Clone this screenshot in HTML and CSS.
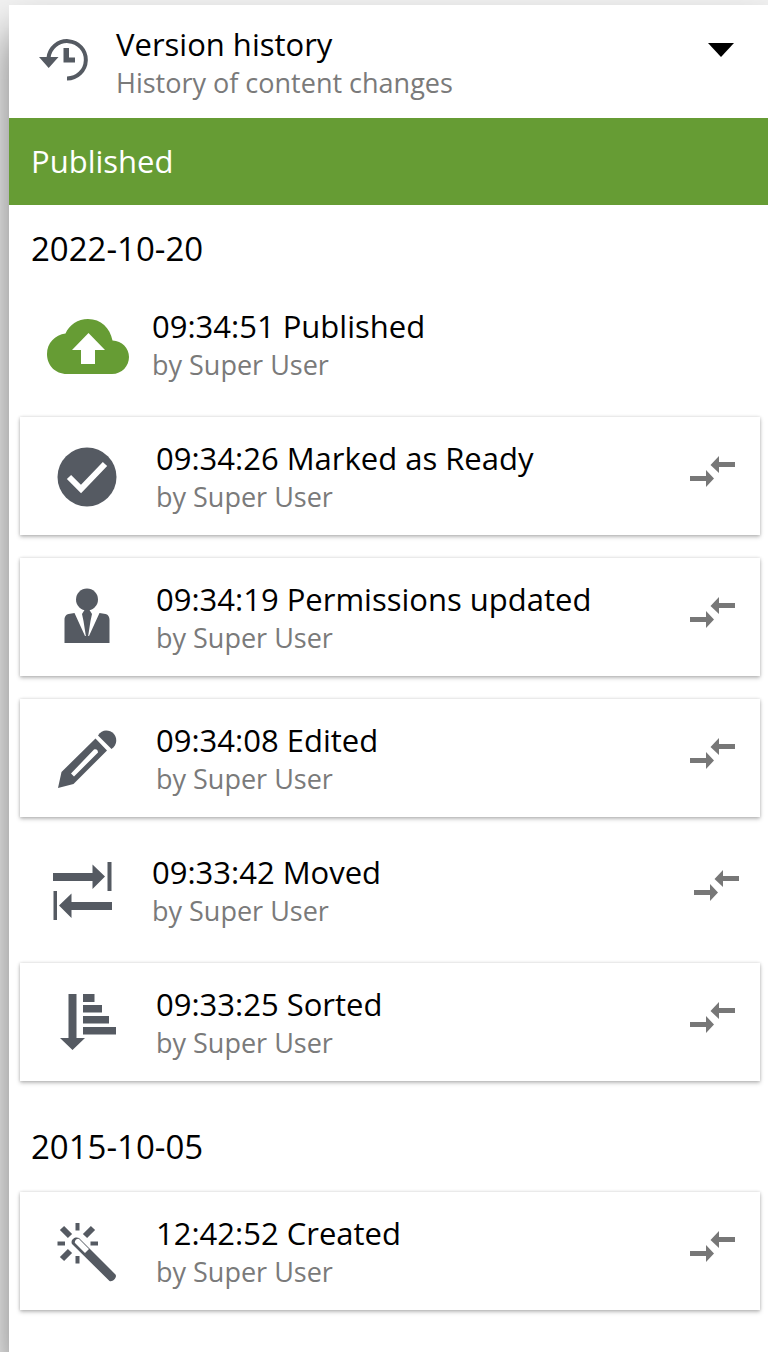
FILE: index.html
```
<!DOCTYPE html>
<html lang="en">
<head>
	<meta charset="utf-8">
	<title>Version history</title>
	<link rel="stylesheet" href="styles.css">
</head>
<body>
	<!-- Shared icon for the compare buttons -->
	<svg class="sprite" aria-hidden="true">
		<symbol id="compare" viewBox="0 0 45 32">
			<path d="M0 20h16v-6l8 8.500-8 8.500v-6H0zM45 6H29V0l-8.500 9L29 17v-6h16z"/>
		</symbol>
	</svg>

	<main class="panel">
		<header class="widget-header">
			<svg class="history-icon" viewBox="0 0 50 42" aria-hidden="true">
				<path d="M9.500 19a18.700 18.700 0 1 1 18.500 20.500" fill="none" stroke="#555a62" stroke-width="4"/>
				<path d="M0 18h19.500L9.700 29zM24.500 9h5.500v9.500h6v5H24.500z"/>
			</svg>
			<div class="widget-title">
				<h1 class="title">Version history</h1>
				<p class="subtitle">History of content changes</p>
			</div>
			<button class="toggle" type="button" aria-label="Select widget">
				<svg class="caret" viewBox="0 0 26 14" aria-hidden="true"><path d="M0 0h26L13 14z"/></svg>
			</button>
		</header>

		<div class="status">Published</div>

		<section class="day">
			<h2 class="date">2022-10-20</h2>
			<ul class="versions">
				<li class="version">
					<svg class="icon published" viewBox="0 0 60 60" aria-hidden="true">
						<path fill-rule="evenodd" d="M14 59C2 59-6 50-6 39S2 20 12.500 18.500C16 10 25 4 35 4c13 0 22 9 24.500 21.500C69 26 76 33 76 42s-7 17-17 17zM35.500 18L19 35h9v14h14V35h10z"/>
					</svg>
					<div class="info">
						<h3 class="title">09:34:51 Published</h3>
						<p class="subtitle">by Super User</p>
					</div>
				</li>
				<li class="version card">
					<svg class="icon" viewBox="0 0 60 60" aria-hidden="true">
						<circle cx="30" cy="30" r="29.500"/>
						<path d="M12 30l12 12L48 17" fill="none" stroke="#fff" stroke-width="6"/>
					</svg>
					<div class="info">
						<h3 class="title">09:34:26 Marked as Ready</h3>
						<p class="subtitle">by Super User</p>
					</div>
					<button class="compare" type="button" aria-label="Compare"><svg><use href="#compare"/></svg></button>
				</li>
				<li class="version card">
					<svg class="icon" viewBox="0 0 60 60" aria-hidden="true">
						<circle cx="30" cy="11.500" r="11"/>
						<path d="M7.500 55V32c0-4 2-5.500 4-6l6-1L28 48h4l10.500-23 6 1c2 .5 4 2 4 6v23z"/>
						<path d="M27.500 22h5l2.500 4-1.500 7L31 49h-2l-2.500-16L25 26z"/>
					</svg>
					<div class="info">
						<h3 class="title">09:34:19 Permissions updated</h3>
						<p class="subtitle">by Super User</p>
					</div>
					<button class="compare" type="button" aria-label="Compare"><svg><use href="#compare"/></svg></button>
				</li>
				<li class="version card">
					<svg class="icon" viewBox="0 0 60 60" aria-hidden="true">
						<path fill-rule="evenodd" d="M1 59L4.500 43 38.500 9.500 50 21.500 16.500 55zM14 44.500l3 3L41 23.500c0-3-2-4-4-3z"/>
						<path d="M41 6.500c4-7 12-5.500 15.500-2s4.500 11-2 15.500z"/>
					</svg>
					<div class="info">
						<h3 class="title">09:34:08 Edited</h3>
						<p class="subtitle">by Super User</p>
					</div>
					<button class="compare" type="button" aria-label="Compare"><svg><use href="#compare"/></svg></button>
				</li>
				<li class="version">
					<svg class="icon" viewBox="0 0 60 60" aria-hidden="true">
						<path d="M0 12h39.500V3.500L52 15.500 39.500 28v-8H0zM54.500 1h4v29h-4z"/>
						<path d="M59 41H18.500v-8.500L6 44.500 18.500 57v-8H59zM.5 30h3.500v29H.5z"/>
					</svg>
					<div class="info">
						<h3 class="title">09:33:42 Moved</h3>
						<p class="subtitle">by Super User</p>
					</div>
					<button class="compare" type="button" aria-label="Compare"><svg><use href="#compare"/></svg></button>
				</li>
				<li class="version card">
					<svg class="icon" viewBox="0 0 60 60" aria-hidden="true">
						<path d="M11.500 1h8v44H28L15.500 57 3 45h8.500z"/>
						<path d="M26 1h11.500v8H26zM26 12h19v7.500H26zM26 23h26v7.500H26zM26 34h33v7.500H26z"/>
					</svg>
					<div class="info">
						<h3 class="title">09:33:25 Sorted</h3>
						<p class="subtitle">by Super User</p>
					</div>
					<button class="compare" type="button" aria-label="Compare"><svg><use href="#compare"/></svg></button>
				</li>
			</ul>
		</section>

		<section class="day">
			<h2 class="date">2015-10-05</h2>
			<ul class="versions">
				<li class="version card">
					<svg class="icon" viewBox="0 0 60 60" aria-hidden="true">
						<path d="M20.500 1v7.500M20.500 34v7.500M.5 21.500H8M33.500 21.500H41" fill="none" stroke="#555a62" stroke-width="4"/>
						<path d="M5 6l8 8M36 6l-8 8M5 37l8-8" fill="none" stroke="#555a62" stroke-width="6"/>
						<path fill-rule="evenodd" d="M15 22c-2-4 3-8 7-6l36.500 36.500c2 3-3 8-6 6.500zM18 21l10 10 4-4-10-10c-2-1-5 2-4 4z"/>
					</svg>
					<div class="info">
						<h3 class="title">12:42:52 Created</h3>
						<p class="subtitle">by Super User</p>
					</div>
					<button class="compare" type="button" aria-label="Compare"><svg><use href="#compare"/></svg></button>
				</li>
			</ul>
		</section>
	</main>
</body>
</html>
```

FILE: styles.css
```
* {
	box-sizing: border-box;
}
body {
	margin: 0;
	padding: 5px 0 0 9px;
	background-color: #f2f2f2;
	font-family: "Open Sans", "Noto Sans", sans-serif;
	color: #000;
	overflow-x: hidden;
}
h1, h2, h3, p, ul {
	margin: 0;
	padding: 0;
	font-weight: 400;
}
button {
	padding: 0;
	border: none;
	background: none;
	cursor: pointer;
}
svg {
	display: block;
	fill: #555a62;
}
.sprite {
	display: none;
}
.panel {
	min-height: calc(100vh - 5px);
	background-color: #fff;
	box-shadow: 0 28px 40px rgba(0, 0, 0, 0.5);
}

/* Header */
.widget-header {
	display: flex;
	align-items: flex-start;
	padding: 19px 34px 17px 30px;
}
.history-icon {
	width: 50px;
	height: 42px;
	margin: 15px 27px 0 0;
}
.widget-title {
	flex: 1;
}
.title {
	font-size: 31px;
	line-height: 41px;
}
.subtitle {
	font-size: 27px;
	line-height: 36px;
	color: #7a7a7a;
}
.toggle {
	margin-top: 19px;
}
.caret {
	width: 26px;
	height: 14px;
	fill: #000;
}
.status {
	padding: 23px 22px;
	background-color: #669c34;
	color: #fff;
	font-size: 31px;
	line-height: 41px;
}

/* Version list */
.date {
	padding: 22px 22px 14px;
	font-size: 33px;
	line-height: 44px;
}
.day + .day {
	padding-top: 22px;
}
.versions {
	display: flex;
	flex-direction: column;
	gap: 14px;
	padding: 0 8px 0 11px;
	list-style: none;
}
.version {
	display: flex;
	align-items: flex-start;
	margin: 0 -4px;
	padding: 21px 25px 20px 37px;
}
.card {
	margin: 0;
	background-color: #fff;
	box-shadow: 0 2px 4px rgba(0, 0, 0, 0.25), 0 0 3px rgba(0, 0, 0, 0.15);
}
.card:first-child, .card + .card {
	margin-top: 9px;
}
.icon {
	width: 60px;
	height: 60px;
	margin: 9px 39px 0 0;
	overflow: visible;
}
.published {
	fill: #669c34;
}
.info {
	flex: 1;
}
.compare {
	margin-top: 18px;
}
.compare svg {
	width: 45px;
	height: 32px;
	fill: #777;
}
```
